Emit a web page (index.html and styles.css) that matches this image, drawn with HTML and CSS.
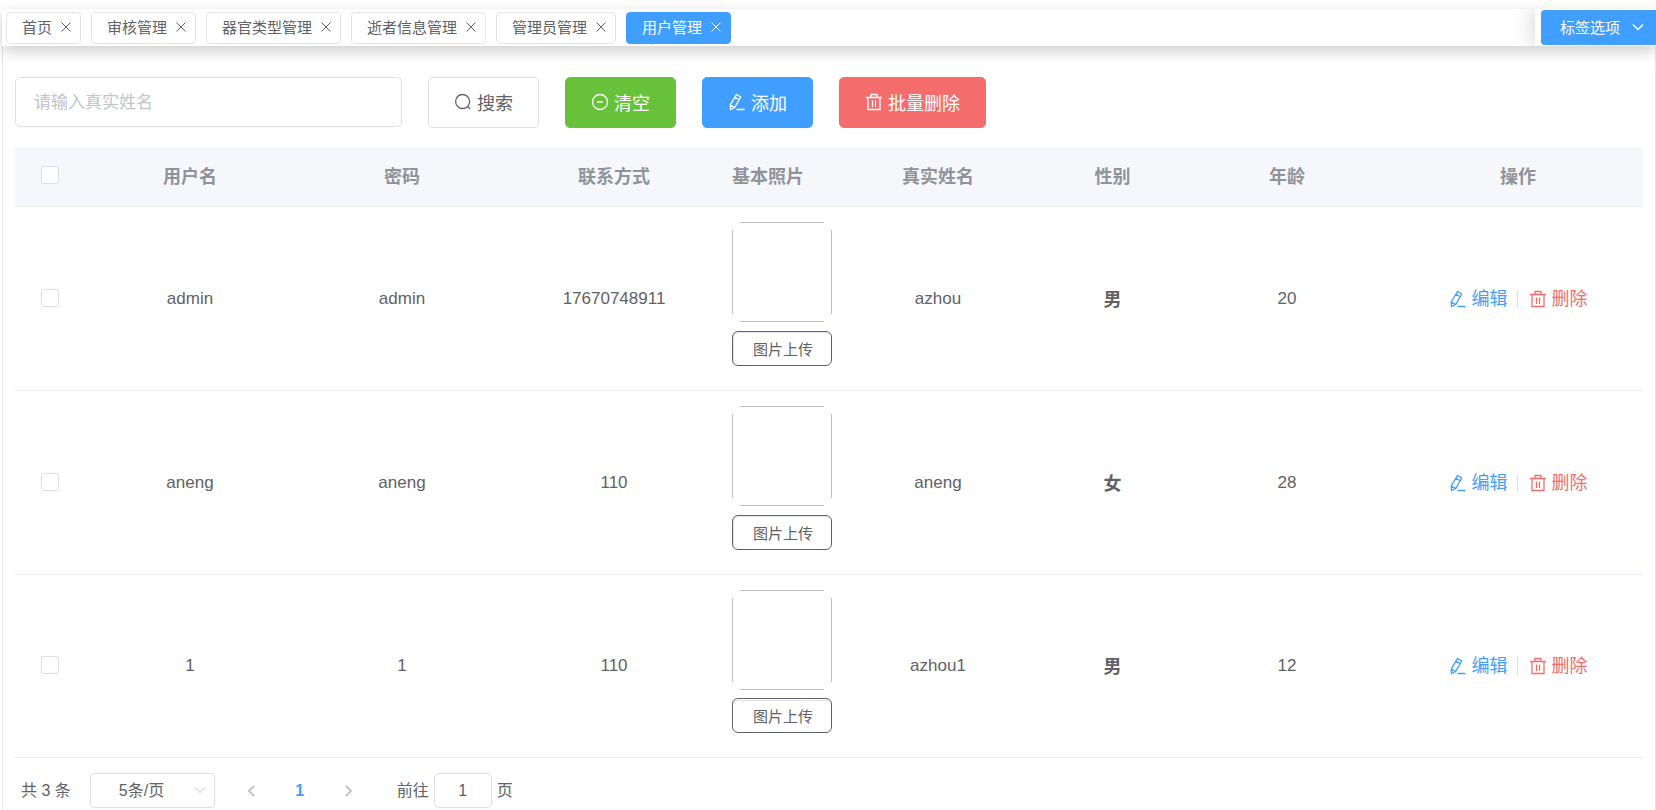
FILE: index.html
```html
<!DOCTYPE html>
<html lang="zh-CN">
<head>
<meta charset="utf-8">
<title>用户管理</title>
<link rel="stylesheet" href="styles.css">
</head>
<body>
<svg class="sprite" aria-hidden="true">
  <symbol id="i-close" viewBox="0 0 12 12"><path d="M1.500 1.500l9 9M10.500 1.500l-9 9"/></symbol>
  <symbol id="i-down" viewBox="0 0 12 12"><path d="M1 3.500l5 5 5-5"/></symbol>
  <symbol id="i-left" viewBox="0 0 12 12"><path d="M8 1L3 6l5 5"/></symbol>
  <symbol id="i-right" viewBox="0 0 12 12"><path d="M4 1l5 5-5 5"/></symbol>
  <symbol id="i-search" viewBox="0 0 18 18"><circle cx="8.600" cy="8.500" r="7"/><path d="M13.600 13.500l2.600 2.600"/></symbol>
  <symbol id="i-minus" viewBox="0 0 18 18"><circle cx="9" cy="9" r="7.500"/><path d="M6 9h6"/></symbol>
  <symbol id="i-edit" viewBox="0 0 18 18"><path d="M8.500 1.500l4.200 2.500-6 10.500-4.200 2-.2-4.600zM7 4.200l4.200 2.500M2.300 12l4.300 2.500M8.500 16.500h8"/></symbol>
  <symbol id="i-trash" viewBox="0 0 18 18"><path d="M1 4.500h16M3 4.500v12h12v-12M6 4.500v-3h6v3M7.500 7.500v6.500M10.500 7.500v6.500"/></symbol>
</svg>

<header class="tabbar">
  <nav class="tabs">
    <a class="tab" href="#">首页<svg class="icon-s"><use href="#i-close"/></svg></a>
    <a class="tab" href="#">审核管理<svg class="icon-s"><use href="#i-close"/></svg></a>
    <a class="tab" href="#">器官类型管理<svg class="icon-s"><use href="#i-close"/></svg></a>
    <a class="tab" href="#">逝者信息管理<svg class="icon-s"><use href="#i-close"/></svg></a>
    <a class="tab" href="#">管理员管理<svg class="icon-s"><use href="#i-close"/></svg></a>
    <a class="tab tab-active" href="#">用户管理<svg class="icon-s"><use href="#i-close"/></svg></a>
  </nav>
  <div class="tab-options">
    <button class="options-btn" type="button">标签选项<svg class="icon-s"><use href="#i-down"/></svg></button>
  </div>
</header>

<main class="panel">
  <form class="toolbar">
    <input class="search-input" type="text" placeholder="请输入真实姓名" aria-label="真实姓名">
    <button class="btn" type="button"><svg class="icon"><use href="#i-search"/></svg>搜索</button>
    <button class="btn btn-success" type="button"><svg class="icon"><use href="#i-minus"/></svg>清空</button>
    <button class="btn btn-primary" type="button"><svg class="icon"><use href="#i-edit"/></svg>添加</button>
    <button class="btn btn-danger" type="button"><svg class="icon"><use href="#i-trash"/></svg>批量删除</button>
  </form>

  <table class="users">
    <colgroup>
      <col class="col-check"><col><col><col><col class="col-photo"><col><col class="col-sex"><col><col class="col-actions">
    </colgroup>
    <thead>
      <tr>
        <th><input class="check" type="checkbox" aria-label="全选"></th>
        <th>用户名</th><th>密码</th><th>联系方式</th><th class="photo-cell">基本照片</th><th>真实姓名</th><th>性别</th><th>年龄</th><th>操作</th>
      </tr>
    </thead>
    <tbody>
      <tr>
        <td><input class="check" type="checkbox" aria-label="选择 admin"></td>
        <td>admin</td><td>admin</td><td>17670748911</td>
        <td class="photo-cell"><div class="photo-box"><svg class="photo" viewBox="0 0 100 100"><path d="M8 .5h84M8 99.500h84M.5 8v84M99.500 8v84"/></svg><button class="upload" type="button">图片上传</button></div></td>
        <td>azhou</td><td class="sex">男</td><td>20</td>
        <td><div class="actions"><a class="edit" href="#"><svg class="icon"><use href="#i-edit"/></svg>编辑</a><a class="delete" href="#"><svg class="icon"><use href="#i-trash"/></svg>删除</a></div></td>
      </tr>
      <tr>
        <td><input class="check" type="checkbox" aria-label="选择 aneng"></td>
        <td>aneng</td><td>aneng</td><td>110</td>
        <td class="photo-cell"><div class="photo-box"><svg class="photo" viewBox="0 0 100 100"><path d="M8 .5h84M8 99.500h84M.5 8v84M99.500 8v84"/></svg><button class="upload" type="button">图片上传</button></div></td>
        <td>aneng</td><td class="sex">女</td><td>28</td>
        <td><div class="actions"><a class="edit" href="#"><svg class="icon"><use href="#i-edit"/></svg>编辑</a><a class="delete" href="#"><svg class="icon"><use href="#i-trash"/></svg>删除</a></div></td>
      </tr>
      <tr>
        <td><input class="check" type="checkbox" aria-label="选择 1"></td>
        <td>1</td><td>1</td><td>110</td>
        <td class="photo-cell"><div class="photo-box"><svg class="photo" viewBox="0 0 100 100"><path d="M8 .5h84M8 99.500h84M.5 8v84M99.500 8v84"/></svg><button class="upload" type="button">图片上传</button></div></td>
        <td>azhou1</td><td class="sex">男</td><td>12</td>
        <td><div class="actions"><a class="edit" href="#"><svg class="icon"><use href="#i-edit"/></svg>编辑</a><a class="delete" href="#"><svg class="icon"><use href="#i-trash"/></svg>删除</a></div></td>
      </tr>
    </tbody>
  </table>

  <footer class="pagination">
    <span class="total">共 3 条</span>
    <span class="size-wrap">
      <select class="size" aria-label="每页条数"><option>5条/页</option></select>
      <svg class="icon-s size-arrow"><use href="#i-down"/></svg>
    </span>
    <div class="pager">
      <button class="page-btn" type="button" aria-label="上一页" disabled><svg class="icon-s"><use href="#i-left"/></svg></button>
      <button class="page-btn page-current" type="button">1</button>
      <button class="page-btn" type="button" aria-label="下一页" disabled><svg class="icon-s"><use href="#i-right"/></svg></button>
    </div>
    <label class="jump"><span>前往</span><input class="jump-input" type="text" value="1"><span>页</span></label>
  </footer>
</main>
</body>
</html>
```
FILE: styles.css
```css
* { box-sizing: border-box; }

body {
  margin: 0;
  min-height: 100vh;
  display: flex;
  flex-direction: column;
  padding: 9px 0 0 2px;
  background: #fff;
  color: #606266;
  font-family: "Liberation Sans", "Noto Sans CJK SC", sans-serif;
  font-size: 17px;
}

button, input, select { font: inherit; color: inherit; }
button { cursor: pointer; }
a { color: inherit; text-decoration: none; }

.sprite { display: none; }
.icon, .icon-s { fill: none; stroke: currentColor; flex: none; }
.icon { width: 18px; height: 18px; stroke-width: 1.3; }
.icon-s { width: 12px; height: 12px; stroke-width: 1; }

.tabbar {
  position: relative;
  display: flex;
  height: 37px;
  background: #fff;
  box-shadow: 0 5px 15px rgba(0, 0, 0, 0.2);
  font-size: 15px;
}
.tabs {
  flex: 1;
  display: flex;
  align-items: center;
  gap: 10px;
  padding-left: 4px;
}
.tab {
  display: flex;
  align-items: center;
  gap: 8px;
  height: 32px;
  padding: 0 8px 2px 15px;
  border: 1px solid #e4e4e7;
  border-radius: 4px;
  white-space: nowrap;
}
.tab-active { background: #409eff; border-color: #409eff; color: #fff; }
.tab-options {
  display: flex;
  align-items: center;
  padding-left: 6px;
  background: #fff;
  box-shadow: 0 0 24px rgba(0, 0, 0, 0.2);
  clip-path: inset(0 0 0 -40px);
}
.options-btn {
  display: flex;
  align-items: center;
  gap: 12px;
  height: 35px;
  padding: 0 12px 2px 19px;
  border: 0;
  border-radius: 4px 0 0 4px;
  background: #409eff;
  color: #fff;
}
.options-btn .icon-s { stroke-width: 1.4; }

.panel {
  flex: 1;
  padding: 31px 12px 0;
  border: solid #e4e4e7;
  border-width: 0 1px;
}

.toolbar { display: flex; gap: 26px; align-items: flex-start; margin-bottom: 19px; }
.search-input {
  width: 387px;
  height: 50px;
  padding: 2px 18px 0;
  border: 1px solid #dcdfe6;
  border-radius: 5px;
  background: #fff;
}
.search-input::placeholder { color: #c0c4cc; opacity: 1; }
.btn {
  display: flex;
  align-items: center;
  gap: 5px;
  height: 51px;
  padding: 0 25px 2px;
  border: 1px solid #dcdfe6;
  border-radius: 5px;
  background: #fff;
  font-size: 18px;
  white-space: nowrap;
}
.btn-success { background: #67c23a; border-color: #67c23a; color: #fff; }
.btn-primary { background: #409eff; border-color: #409eff; color: #fff; }
.btn-danger { background: #f56c6c; border-color: #f56c6c; color: #fff; }

.users {
  width: 100%;
  table-layout: fixed;
  border-collapse: separate;
  border-spacing: 0;
  text-align: center;
}
.col-check { width: 69px; }
.col-photo { width: 112px; }
.col-sex { width: 137px; }
.col-actions { width: 250px; }
.users th, .users td { padding: 0; border-bottom: 1px solid #ebeef5; }
.users th {
  height: 60px;
  padding-bottom: 3px;
  background: #f5f7fa;
  color: #909399;
  font-size: 18px;
}
.users .photo-cell { padding-left: 12px; text-align: left; }
.users .sex { padding-bottom: 2px; font-size: 18px; font-weight: 700; }
.check {
  appearance: none;
  display: block;
  width: 18px;
  height: 18px;
  margin: 0 auto;
  border: 1px solid #dcdfe6;
  border-radius: 2px;
  background: #fff;
}
td .check { margin-bottom: 2px; }
.photo-box {
  display: flex;
  flex-direction: column;
  gap: 9px;
  width: 100px;
  padding: 15px 0 24px;
}
.photo { width: 100px; height: 100px; fill: none; stroke: #c0c0c0; }
.upload {
  height: 35px;
  padding: 0 0 0 20px;
  border: 1px solid #606266;
  border-radius: 6px;
  background: #fff;
  box-shadow: inset 1px 1px #e4e7ed;
  font-size: 15px;
  text-align: left;
}
.users tr:last-child .photo-box { gap: 8px; }
.users tr:last-child .upload { box-shadow: inset 0 1px #fff, inset 0 2px #dcdfe6; }

.actions { display: flex; align-items: center; justify-content: center; font-size: 18px; }
.actions a { display: flex; align-items: center; gap: 5px; height: 18px; line-height: 18px; }
.edit { color: #409eff; padding-right: 9px; border-right: 1px solid #dcdfe6; }
.delete { color: #f56c6c; padding-left: 11px; }

.pagination {
  display: flex;
  align-items: center;
  height: 35px;
  margin: 15px 0 0 6px;
  font-size: 16px;
}
.total, .jump span { padding-bottom: 3px; }
.size-wrap { position: relative; margin-left: 19px; }
.size {
  appearance: none;
  display: block;
  width: 125px;
  height: 35px;
  padding: 0 28px;
  border: 1px solid #dcdfe6;
  border-radius: 4px;
  background: #fff;
}
.size-arrow { position: absolute; right: 9px; top: 11px; color: #c0c4cc; pointer-events: none; }
.pager { display: flex; gap: 10px; margin-left: 18px; }
.page-btn {
  display: flex;
  align-items: center;
  justify-content: center;
  width: 38px;
  height: 35px;
  padding: 0;
  border: 0;
  background: none;
  color: #c0c4cc;
}
.page-btn .icon-s { stroke-width: 2; }
.page-current { color: #409eff; font-weight: 700; }
.jump { display: flex; align-items: center; gap: 5px; margin-left: 30px; }
.jump-input {
  width: 58px;
  height: 35px;
  border: 1px solid #dcdfe6;
  border-radius: 5px;
  text-align: center;
}
```
